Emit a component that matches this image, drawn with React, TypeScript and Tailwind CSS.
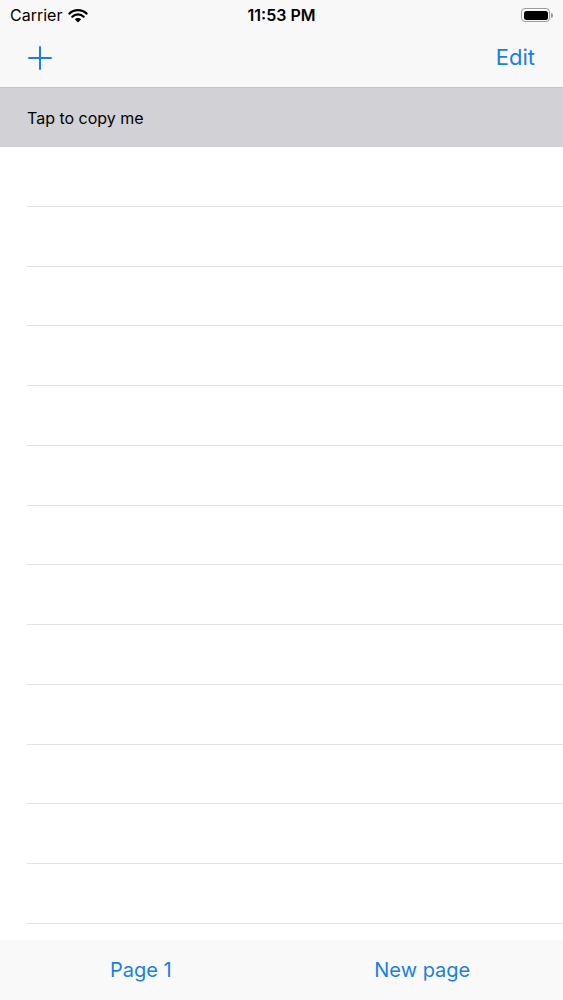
import React from "react";

const rows = Array.from({ length: 13 });

export default function App() {
  return (
    <div className="w-[563px] h-[1000px] flex flex-col bg-white overflow-hidden" style={{ fontFamily: "Inter, 'Liberation Sans', sans-serif" }}>
      <header className="bg-[#f8f8f8] border-b border-[#c4c4c7] shrink-0">
        <div className="h-[30px] flex items-center justify-between px-[10px] relative">
          <div className="flex items-center gap-[6px] text-[16px] text-black">
            <span>Carrier</span>
            <svg width="20" height="15" viewBox="0 0 20 15">
              <path d="M10 14.5 L6.8 11.2 A4.6 4.6 0 0 1 13.2 11.2 Z" fill="#000" />
              <path d="M4.3 8.7 A8.2 8.2 0 0 1 15.7 8.7" stroke="#000" strokeWidth="2.2" fill="none" strokeLinecap="round" />
              <path d="M1.4 5.6 A12.4 12.4 0 0 1 18.6 5.6" stroke="#000" strokeWidth="2.2" fill="none" strokeLinecap="round" />
            </svg>
          </div>
          <span className="absolute left-1/2 -translate-x-1/2 text-[16px] font-semibold text-black">11:53 PM</span>
          <div className="flex items-center">
            <div className="w-[29px] h-[14px] rounded-[4px] border border-[#9a9a9a] p-[1.5px]">
              <div className="w-full h-full rounded-[2.5px] bg-black" />
            </div>
            <div className="w-[2px] h-[5px] bg-[#9a9a9a] rounded-r-sm ml-[1px]" />
          </div>
        </div>
        <div className="h-[57px] flex items-center justify-between pl-[28px] pr-[28px]">
          <svg width="24" height="24" viewBox="0 0 24 24" className="-mt-[2px]">
            <path d="M12 1 V23 M1 12 H23" stroke="#1a7fe0" strokeWidth="2" strokeLinecap="round" />
          </svg>
          <span className="text-[22px] text-[#1a7fe0] -mt-[2px]">Edit</span>
        </div>
      </header>
      <div className="h-[59px] bg-[#d1d1d6] flex items-center pl-[27px] text-[16px] text-black shrink-0">
        Tap to copy me
      </div>
      <div className="flex-1">
        {rows.map((_, i) => (
          <div key={i} className="h-[59.75px] pl-[27px] flex items-end">
            <div className="w-full h-px bg-[#e2e2e4]" />
          </div>
        ))}
      </div>
      <footer className="h-[60px] bg-[#f9f9f9] grid grid-cols-2 items-center shrink-0 text-[20px] text-[#1a7fe0]">
        <span className="text-center">Page 1</span>
        <span className="text-center">New page</span>
      </footer>
    </div>
  );
}
